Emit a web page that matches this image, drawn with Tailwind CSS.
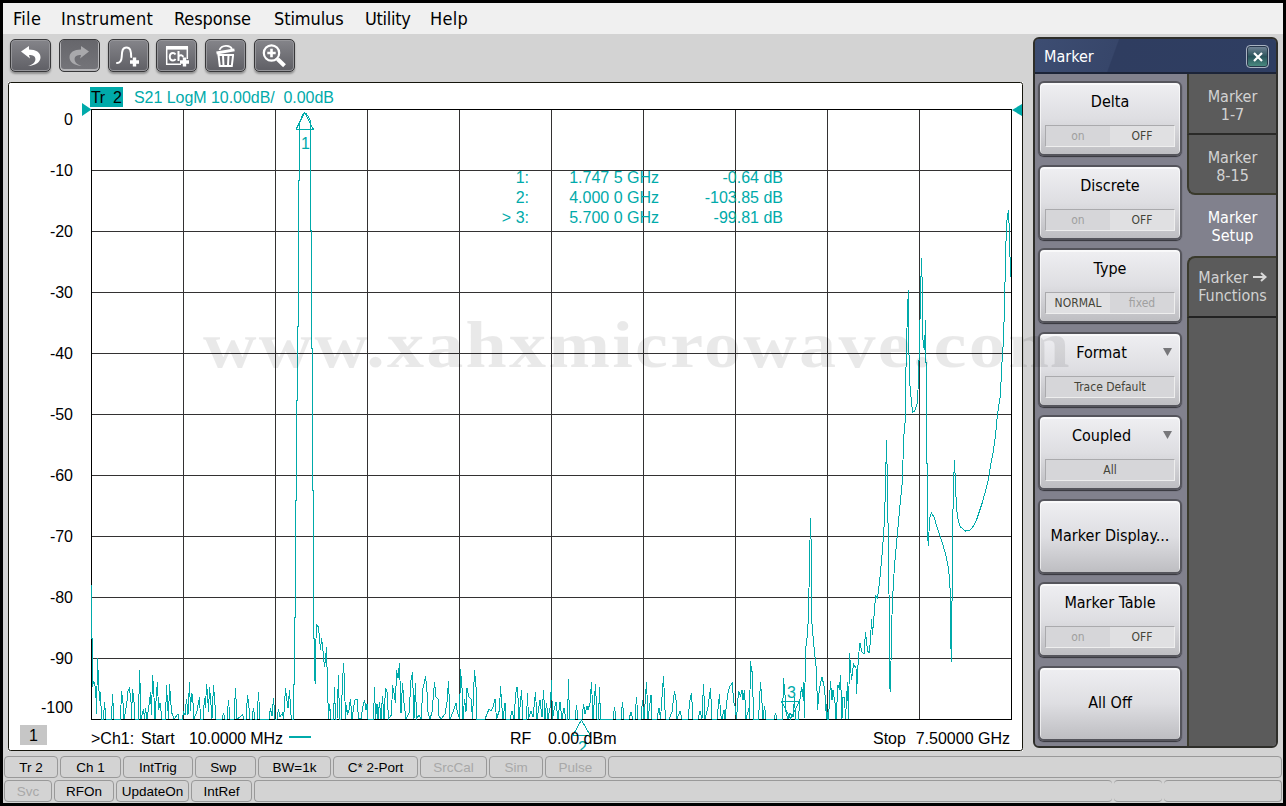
<!DOCTYPE html>
<html lang="en">
<head>
  <meta charset="UTF-8" />
  <meta name="viewport" content="width=device-width, initial-scale=1.0"/>
  <title>Network Analyzer</title>
  <script src="https://cdn.jsdelivr.net/npm/@tailwindcss/browser@4"></script>
</head>
<body class="bg-black overflow-hidden">
<div class="relative w-[1286px] h-[806px] p-[3px] font-['DejaVu_Sans_Condensed','DejaVu_Sans',sans-serif]">
  <div class="w-full h-full bg-[#d3d3d3] flex flex-col">

    <!-- Menu bar -->
    <div class="h-[31px] shrink-0 bg-[#f0f0f0] flex items-center pl-[10px] text-[18px] tracking-[0.3px] text-black whitespace-nowrap">
      <a class="w-12">File</a>
      <a class="w-[113px]">Instrument</a>
      <a class="w-[100px] tracking-[-0.1px]">Response</a>
      <a class="w-[91px] tracking-[-0.1px]">Stimulus</a>
      <a class="w-[65px] tracking-[-0.3px]">Utility</a>
      <a>Help</a>
    </div>

    <div class="flex h-[719px] shrink-0">
      <!-- Left side: toolbar + chart -->
      <div class="w-[1020px] pl-[5px] flex flex-col">
        <div class="h-12 shrink-0 flex gap-[7.8px] pt-[5px] pl-[2px]">
          <div class="w-[41px] h-[33px] rounded-[5px] border border-[#38383a] bg-linear-to-b from-[#85858a] to-[#5f5f65] shadow-[inset_0_0_0_1px_#96969a,0_2px_2px_#00000050] flex items-center justify-center">
            <svg class="w-7 h-7" viewBox="0 0 28 28" fill="#fff"><path d="M4 9.500l8-5.500v3.500c7 0 11.500 3 11.500 7.800 0 4.700-4.500 8.200-12.500 8.700 5-1.500 7.400-3.800 7.400-6.800 0-2.900-2.400-4.200-6.400-4.200L13 16.500z"/></svg>
          </div>
          <div class="w-[41px] h-[33px] rounded-[5px] border border-[#38383a] bg-linear-to-b from-[#66666b] to-[#75757a] shadow-[inset_0_-1px_0_1px_#b5b5b8] flex items-center justify-center">
            <svg class="w-7 h-7" viewBox="0 0 28 28" fill="#a9a9ac"><path d="M24 9.500l-8-5.500v3.500c-7 0-11.500 3-11.500 7.800 0 4.700 4.500 8.200 12.500 8.700-5-1.500-7.400-3.800-7.400-6.800 0-2.900 2.400-4.200 6.400-4.200L15 16.500z"/></svg>
          </div>
          <div class="w-[41px] h-[33px] rounded-[5px] border border-[#38383a] bg-linear-to-b from-[#85858a] to-[#5f5f65] shadow-[inset_0_0_0_1px_#96969a,0_2px_2px_#00000050] flex items-center justify-center">
            <svg class="w-7 h-7" viewBox="0 0 28 28" fill="none" stroke="#fff"><path stroke-width="2" stroke-linecap="round" d="M3 21c3.500 0 4.500-2 4.700-6 .2-6 .8-9.500 4.800-9.500S17 9 17.200 15"/><path stroke-width="3.400" d="M20.500 15.500v9M16 20h9"/></svg>
          </div>
          <div class="w-[41px] h-[33px] rounded-[5px] border border-[#38383a] bg-linear-to-b from-[#85858a] to-[#5f5f65] shadow-[inset_0_0_0_1px_#96969a,0_2px_2px_#00000050] flex items-center justify-center">
            <svg class="w-7 h-7" viewBox="0 0 28 28" fill="none" stroke="#fff"><path stroke-width="1.500" d="M18 22.300H3.700V5.500h20.600V17"/><path stroke-width="3.600" d="M3 5.800h22"/><path stroke-width="2" d="M12.500 12.500c-.6-1-1.300-1.500-2.500-1.500-2.300 0-3.200 1.600-3.200 3.800S7.700 18.500 10 18.500c1.200 0 2-.5 2.600-1.500M15.500 9v10M15.500 14.500c1.500-2 4.500-1.500 4.500.8"/><path stroke-width="3.400" d="M21.500 15.500v9M17 20h9"/></svg>
          </div>
          <div class="w-[41px] h-[33px] rounded-[5px] border border-[#38383a] bg-linear-to-b from-[#85858a] to-[#5f5f65] shadow-[inset_0_0_0_1px_#96969a,0_2px_2px_#00000050] flex items-center justify-center">
            <svg class="w-7 h-7" viewBox="0 0 28 28" fill="none" stroke="#fff"><path stroke-width="1.800" d="M7.500 8C9.500 3 18 2.500 20 7"/><path stroke-width="2.800" d="M4.500 11L22.500 7.800"/><path stroke-width="2" d="M5.500 13h16.500M6.500 13l1.300 11h12l1.300-11M11 13.500l.5 10M16.500 13.500l-.5 10"/></svg>
          </div>
          <div class="w-[41px] h-[33px] rounded-[5px] border border-[#38383a] bg-linear-to-b from-[#85858a] to-[#5f5f65] shadow-[inset_0_0_0_1px_#96969a,0_2px_2px_#00000050] flex items-center justify-center">
            <svg class="w-7 h-7" viewBox="0 0 28 28" fill="none" stroke="#fff"><circle cx="11.500" cy="11" r="7.700" stroke-width="2.200"/><path stroke-width="2.600" d="M11.500 6.800v8.400M7.300 11h8.400"/><path stroke-width="4" d="M17.500 17l7 6.700"/></svg>
          </div>
        </div>

        <!-- Chart -->
        <svg class="w-[1015px] h-[669px] shrink-0 bg-white font-['Liberation_Sans',Arial,sans-serif]" viewBox="8 82 1015 669" font-size="16">
          <rect x="8.500" y="82.500" width="1014" height="668" rx="2" fill="#fff" stroke="#15150c"/>
          <g shape-rendering="crispEdges">
            <path id="grid" stroke="#333132" fill="none"/>
            <path d="M91.500 109.500h920v610h-920z" fill="none" stroke="#000"/>
            <polyline fill="none" stroke="#0aa" points="91.5,585 91.5,637 92.5,640 92.5,687 93.5,682 94.5,683 95.5,689 96.5,706 96.5,714 97.5,658 98.5,680 99.5,701 100.5,692 101.5,719 103.5,719 104.5,702 106,719 111.500,719 112.5,694 114,719 120.5,719 121.5,691 123,703 124,719 125.5,712 127,701 128,691 129.5,688 131,702 131.500,719 132.5,689 134,702 135,719 138.500,719 139.5,670 140.5,695 141,719 143.5,709 144.5,719 145.5,708 147,719 149.5,702 150.5,692 151.5,715 152.5,675 153.5,686 155,719 156.5,692 157.5,682 158.5,710 160,703 162,719 165.500,719 166.5,685 167.5,703 168.5,719 169.5,684 170.5,698 171.5,712 174,719 178,714 179,719 182.5,719 183.5,712 185,715 186.5,699 188,715 189.5,682 190.5,711 191.5,694 192.5,695 194,719 197,711 199.5,697 200.5,719 203,719 204.5,698 205.5,708 206.5,684 207.5,693 208.5,712 209.5,687 210.5,698 212,719 213.5,685 215,705 216,719 222,719 223.5,713 225,719 227,719 228.5,700 230,719 234,719 235.5,688 237,719 240,717 242.5,715 244,719 246,719 247.5,695 248.5,702 250,719 252,719 253.5,708 255,719 257,719 258.5,692 260,719 269,719 270.5,708 272,716 273.5,698 275,719 277,719 278.5,709 280,717 282.5,713 283.5,719 284.5,705 285.5,688 286.5,698 288,708 289.5,690 291,715 292,719 293.5,719 293.5,684 294.5,684 294.5,617 295.5,617 295.5,500 296.5,500 296.5,400 297.5,400 297.5,326 298.5,326 298.5,180 299.5,180 299.5,125 300.5,120 302.5,115 304.5,113 306.5,114 308.5,117 310.5,121 310.5,230 311.5,230 311.5,348 312.5,348 312.5,490 313.5,490 313.5,638 314.5,638 314.5,678 315.5,684 315.5,653 316.5,625 318.5,627 320.5,650 321.5,638 322.5,645 323.5,656 324.5,667 325.5,660 326.5,647 327.5,685 328.5,719 329.5,704 331,719 333.5,719 334.5,687 335.5,719 337,719 338.5,675 339.5,719 341,719 342.500,684 343.5,663 344.5,682 345.5,719 346.5,705 347.5,715 349,710 350.5,699 352,719 354,705 355,700 357,699 358.5,718 361,719 363,706 364.5,700 366,710 367,704 368,719 373.5,719 374.5,687 375.5,719 377,704 378,719 379.5,702 381,719 382.5,696 384,719 385.5,688 387,692 388.5,719 391.500,715 392.5,685 394,693 395.5,703 396.5,670 398,678 399.5,663 401,713 402.5,683 404,703 406,719 409.5,712 410.5,683 412.5,672 414,719 415.5,683 416.5,719 419,715 421,719 423,688 424,684 425.5,676 427,692 428,712 430,719 432,712 434.5,682 436,697 438,699 439,716 441,719 445,714 447,702 448.5,681 450,719 453,712 454.5,708 456,703 457,710 459.5,719 460.5,669 462,688 463,719 464.5,699 466,712 467,688 469,697 471,699 472.5,719 474.5,670 476,687 477,719 485,719 489,709 491,711 493,707 495,699 496.5,719 499.5,710 500.5,686 502,708 503,719 505,703 506,719 510,719 512,711 514,719 515,704 516.5,687 517.5,687 519,719 521.5,690 523,719 526.5,719 527.5,693 528.5,719 531,711 533,717 535.5,692 537,719 540,700 542,717 543.5,690 545,719 546.5,703 548,719 550.5,705 551.5,680 552.5,719 554,710 556,702 558,719 560,702 562,719 564,708 566,719 567.500,719 568.5,679 569.5,719 575,719 576.5,705 578,719 582,719 583.5,704 585,714 587,706 588,710 590,703 591.5,682 593,719 595.5,684 597,719 598.5,719 599.5,687 600.5,719 613,719 614.5,707 616,719 621,719 622.5,702 624,719 629,719 631,712 633,719 635,719 636.5,697 638,719 641,719 642.5,700 644,719 646.5,682 648,719 651,695 652,719 657,719 659,708 660.5,719 663.5,676 665,710 666,719 669,719 672,712 674.5,691 676,700 677,719 680,711 682,719 688,719 690,700 691.5,693 693,719 698,719 700,711 702,719 703.5,684 705,719 708,707 710.5,688 712,719 717,719 719.5,694 720.5,714 722,719 724,710 725,719 727,700 728.5,690 730,686 732.5,683 733.5,702 735,706 736.5,719 738.5,691 740.5,696 742,690 743,700 744.5,690 746,719 749,708 749.500,719 750.5,661 751.500,670 752.5,673 753.500,719 758.500,719 760.5,682 762,703 763,719 764.5,706 766,719 774,719 775.5,713 777,719 782.5,719 783.5,678 785,695 786,712 788,719 790,713 793,717 794.500,697 795.5,719 798.5,719 799.5,703 801.5,687 802.5,697 803.5,682 804.5,718 805.5,650 807.5,634 808.5,615 809.5,562 810.5,518 811.5,559 811.5,618 813.5,642 815.5,662 816.5,670 817.5,710 819.5,688 822,677 824.5,688 825.5,702 826.5,719 826.500,704 827.5,719 828.500,719 830.5,681 832,700 833,690 835,703 836,719 838,685 839.500,690 840.5,675 842,719 843,697 844.5,697 845.5,719 847.5,682 848.5,719 849.5,653 851.5,680 853.5,664 856,668 856.5,694 858.5,656 860,643 862,652 864,654 865.5,632 867.5,651 869,653 870.5,641 871.5,619 872.5,635 874.5,610 875.5,596 877.5,598 879.5,582 882.5,550 884.5,520 885.5,485 886.5,440 887.5,486 888.5,557 889.5,630 889.5,685 890.5,692 891.5,630 892.5,600 894.5,565 897.5,533 900.500,500 902.5,480 903.5,440 905.5,417 905.5,388 906.5,347 907.5,309 908.5,290 908.5,328 909.5,380 911.5,402 912.5,412 914.5,411 917.5,403 918.5,377 919.5,345 920.5,295 921.5,258 922.5,295 922.5,335 923.5,345 924.5,350 925.5,320 925.5,362 926.5,362 926.5,463 927.5,463 927.5,535 928.5,546 929.5,518 931.5,513 934,517 937,527 940,536 943,545 946,556 948.5,568 949.5,580 950.5,596 950.5,636 951.5,662 951.500,608 952.5,595 952.500,535 953.5,485 954.5,460 955.5,485 956.5,508 958.5,522 960.5,527 965.5,531 970.5,530 973.5,526 976.5,520 979.5,511 982.5,502 985.5,491 988.5,479 990.5,466 993.5,450 995.5,435 997.5,414 1000.5,395 1001.5,370 1003.5,340 1004.5,305 1005.5,260 1006.5,223 1008.5,210 1009.5,235 1010.5,277"/>
            <path d="M296 129.500h18M304.500 112.500l-8.500 17M304.500 112.500l9 17M573 735.500h17M581.500 720l-8.500 15M581.500 720l8.500 15M781.500 701.500h18l-9 17z" fill="none" stroke="#0aa"/>
          </g>
          <path d="M82 103v13l9.500-6.500zM1022 104v12l-10-6z" fill="#0aa"/>

          <rect x="90" y="87" width="33" height="20" fill="#0aa"/>
          <text x="91" y="103" textLength="31" xml:space="preserve">Tr  2</text>
          <g fill="#0aa">
            <text x="134" y="103" textLength="200" class="whitespace-pre">S21 LogM 10.00dB/  0.00dB</text>
            <text x="301" y="149">1</text>
            <text x="787" y="698">3</text>
            <svg x="570" y="737" width="30" height="13" viewBox="570 737 30 13"><text x="578" y="753">2</text></svg>
            <g text-anchor="end">
              <text x="529" y="183">1:</text><text x="659" y="183">1.747 5 GHz</text><text x="783" y="183">-0.64 dB</text>
              <text x="529" y="203">2:</text><text x="659" y="203">4.000 0 GHz</text><text x="783" y="203">-103.85 dB</text>
              <text x="529" y="223">&gt; 3:</text><text x="659" y="223">5.700 0 GHz</text><text x="783" y="223">-99.81 dB</text>
            </g>
          </g>
          <g id="axis" text-anchor="end"></g>

          <rect x="20" y="725" width="27" height="20" fill="#c6c6c6"/>
          <text x="29" y="741">1</text>
          <text x="91" y="744">&gt;Ch1:</text>
          <text x="141" y="744">Start</text>
          <text x="189" y="744" textLength="94">10.0000 MHz</text>
          <path d="M289 737h22" stroke="#0aa" stroke-width="2"/>
          <text x="510" y="744">RF</text>
          <text x="548" y="744">0.00 dBm</text>
          <text x="873" y="744">Stop</text>
          <text x="1010" y="744" text-anchor="end">7.50000 GHz</text>
        </svg>
      </div>

      <!-- Softkey panel -->
      <div class="ml-[10px] mt-[3px] w-[245px] h-[711px] rounded-[6px] border-2 border-[#2e2e2a] bg-[#5b5b5b] flex flex-col overflow-hidden">
        <div class="h-[35px] shrink-0 bg-[linear-gradient(110deg,#3d4d72_0%,#37466a_33%,#2f3d60_33.500%,#2f3e62_100%)] border-b-2 border-[#1c2438] flex items-center justify-between pl-[9px] pr-[7px] text-[16px] text-white">
          <span class="pt-[2px]">Marker</span>
          <div class="w-[23px] h-[23px] mt-[2px] rounded-[4px] border border-[#a9b3c2] bg-linear-to-b from-[#76869a] via-[#29535b] to-[#4d9084] shadow-[inset_0_0_0_1px_#26364a] flex items-center justify-center">
            <svg class="w-3 h-3" viewBox="0 0 12 12" stroke="#fff" stroke-width="2.200"><path d="M2 2l8 8M10 2l-8 8"/></svg>
          </div>
        </div>
        <div class="flex grow">
          <div class="w-[152px] shrink-0 bg-[#81818d] pl-[3px] pr-[5px] pt-[7px] pb-[5px] flex flex-col justify-between text-[16px] text-black text-center leading-5">
            <div class="h-[75px] rounded-[6px] border-2 border-[#55555c] bg-linear-to-b from-[#efeff2] via-[#dedee2] to-[#bebec2] shadow-[inset_0_1px_0_1px_#ffffffa0,0_1px_1px_#33333a] pt-[9px]">
              Delta
              <div class="flex mx-[5px] mt-[13px] h-[22px] border border-[#aaaaad] border-r-[#eee] border-b-[#eee] text-[12px]"><span class="w-1/2 bg-[#d6d6d9] text-[#a0a0a0]">on</span><span class="w-1/2 bg-[#e0e0e2] text-[#444438]">OFF</span></div>
            </div>
            <div class="h-[75px] rounded-[6px] border-2 border-[#55555c] bg-linear-to-b from-[#efeff2] via-[#dedee2] to-[#bebec2] shadow-[inset_0_1px_0_1px_#ffffffa0,0_1px_1px_#33333a] pt-[9px]">
              Discrete
              <div class="flex mx-[5px] mt-[13px] h-[22px] border border-[#aaaaad] border-r-[#eee] border-b-[#eee] text-[12px]"><span class="w-1/2 bg-[#d6d6d9] text-[#a0a0a0]">on</span><span class="w-1/2 bg-[#e0e0e2] text-[#444438]">OFF</span></div>
            </div>
            <div class="h-[75px] rounded-[6px] border-2 border-[#55555c] bg-linear-to-b from-[#efeff2] via-[#dedee2] to-[#bebec2] shadow-[inset_0_1px_0_1px_#ffffffa0,0_1px_1px_#33333a] pt-[9px]">
              Type
              <div class="flex mx-[5px] mt-[13px] h-[22px] border border-[#aaaaad] border-r-[#eee] border-b-[#eee] text-[12px]"><span class="w-1/2 bg-[#e0e0e2] text-[#444438]">NORMAL</span><span class="w-1/2 bg-[#d6d6d9] text-[#a0a0a0]">fixed</span></div>
            </div>
            <div class="h-[75px] rounded-[6px] border-2 border-[#55555c] bg-linear-to-b from-[#efeff2] via-[#dedee2] to-[#bebec2] shadow-[inset_0_1px_0_1px_#ffffffa0,0_1px_1px_#33333a] pt-[9px]">
              <div class="flex h-5"><span class="w-[123px]">Format</span><svg class="w-[9px] h-2 mt-[5px]" viewBox="0 0 9 8"><path d="M0 0h9l-4.500 8z" fill="#77777a"/></svg></div>
              <div class="mx-[5px] mt-[13px] h-[22px] border border-[#aaaaad] border-r-[#eee] border-b-[#eee] bg-[#d6d6d9] text-[12px] text-[#444438]">Trace Default</div>
            </div>
            <div class="h-[75px] rounded-[6px] border-2 border-[#55555c] bg-linear-to-b from-[#efeff2] via-[#dedee2] to-[#bebec2] shadow-[inset_0_1px_0_1px_#ffffffa0,0_1px_1px_#33333a] pt-[9px]">
              <div class="flex h-5"><span class="w-[123px]">Coupled</span><svg class="w-[9px] h-2 mt-[5px]" viewBox="0 0 9 8"><path d="M0 0h9l-4.500 8z" fill="#77777a"/></svg></div>
              <div class="mx-[5px] mt-[13px] h-[22px] border border-[#aaaaad] border-r-[#eee] border-b-[#eee] bg-[#d6d6d9] text-[12px] text-[#444438]">All</div>
            </div>
            <div class="h-[75px] rounded-[6px] border-2 border-[#55555c] bg-linear-to-b from-[#efeff2] via-[#dedee2] to-[#bebec2] shadow-[inset_0_1px_0_1px_#ffffffa0,0_1px_1px_#33333a] flex items-center justify-center whitespace-nowrap">Marker Display...</div>
            <div class="h-[75px] rounded-[6px] border-2 border-[#55555c] bg-linear-to-b from-[#efeff2] via-[#dedee2] to-[#bebec2] shadow-[inset_0_1px_0_1px_#ffffffa0,0_1px_1px_#33333a] pt-[9px]">
              Marker Table
              <div class="flex mx-[5px] mt-[13px] h-[22px] border border-[#aaaaad] border-r-[#eee] border-b-[#eee] text-[12px]"><span class="w-1/2 bg-[#d6d6d9] text-[#a0a0a0]">on</span><span class="w-1/2 bg-[#e0e0e2] text-[#444438]">OFF</span></div>
            </div>
            <div class="h-[75px] rounded-[6px] border-2 border-[#55555c] bg-linear-to-b from-[#efeff2] via-[#dedee2] to-[#bebec2] shadow-[inset_0_1px_0_1px_#ffffffa0,0_1px_1px_#33333a] flex items-center justify-center">All Off</div>
          </div>

          <!-- Tabs -->
          <div class="grow flex flex-col text-[16px] leading-[18px] text-[#d2d2d2] text-center bg-[#81818d]">
            <div class="h-[61px] pt-[5px] border-l-2 border-b-2 border-l-[#3a3a2c] border-b-[#2a2a28] bg-[#5b5b5b] flex items-center justify-center">Marker<br>1-7</div>
            <div class="h-[60px] pt-[5px] rounded-bl-[8px] border-l-2 border-b-2 border-[#3a3a2c] bg-[#5b5b5b] flex items-center justify-center">Marker<br>8-15</div>
            <div class="h-[61px] pt-[2px] pl-[2px] flex items-center justify-center text-white">Marker<br>Setup</div>
            <div class="h-[62px] rounded-tl-[8px] border-l-2 border-y-2 border-[#3a3a2c] border-b-[#222] bg-[#5b5b5b] flex items-center justify-center"><span>Marker <svg class="inline w-[14px] h-3 align-baseline" viewBox="0 0 14 12" fill="none" stroke="#d8d8d8" stroke-width="2"><path d="M0 6h12M8 2l4.500 4L8 10"/></svg><br>Functions</span></div>
            <div class="grow border-l-2 border-[#3a3a2c] bg-[#5b5b5b]"></div>
          </div>
        </div>
      </div>
    </div>

    <!-- Status bar -->
    <div class="mt-[3px] pl-[1px] flex flex-col gap-[2px] text-[13.5px] leading-[22px] text-center text-black font-['Liberation_Sans',Arial,sans-serif] whitespace-nowrap">
      <div class="flex gap-[2px] h-[22px]">
        <div class="w-[54px] rounded-[4px] border border-[#999]">Tr 2</div>
        <div class="w-[61px] rounded-[4px] border border-[#999]">Ch 1</div>
        <div class="w-[70px] rounded-[4px] border border-[#999]">IntTrig</div>
        <div class="w-[61px] rounded-[4px] border border-[#999] pr-1">Swp</div>
        <div class="w-[73px] rounded-[4px] border border-[#999]">BW=1k</div>
        <div class="w-[85px] rounded-[4px] border border-[#999]">C* 2-Port</div>
        <div class="w-[67px] rounded-[4px] border border-[#999] text-[#a8a8a8]">SrcCal</div>
        <div class="w-[54px] rounded-[4px] border border-[#999] text-[#a8a8a8]">Sim</div>
        <div class="w-[61px] rounded-[4px] border border-[#999] text-[#a8a8a8]">Pulse</div>
        <div class="w-[674px] rounded-[4px] border border-[#999]"></div>
      </div>
      <div class="flex gap-[2px] h-[22px]">
        <div class="w-12 rounded-[4px] border border-[#999] text-[#a8a8a8]">Svc</div>
        <div class="w-[60px] rounded-[4px] border border-[#999]">RFOn</div>
        <div class="w-[73px] rounded-[4px] border border-[#999]">UpdateOn</div>
        <div class="w-[61px] rounded-[4px] border border-[#999]">IntRef</div>
        <div class="w-[858px] rounded-[4px] border border-r-0 border-[#999]"></div>
        <div class="w-12 rounded-[4px] border-y border-[#999]"></div>
        <div class="w-[118px] rounded-[4px] border border-l-0 border-[#999]"></div>
      </div>
    </div>
  </div>

  <!-- Watermark -->
  <svg class="absolute left-0 top-0 w-[1286px] h-[806px] pointer-events-none" viewBox="0 0 1286 806">
    <text x="203" y="367" textLength="869" lengthAdjust="spacingAndGlyphs" letter-spacing="2" font-family="Liberation Serif, serif" font-weight="bold" font-size="66" fill="#000" fill-opacity="0.085">www.xahxmicrowave.com</text>
  </svg>
</div>
<script>
  // 10 x 10 divisions
  let d = "";
  for (let i = 1; i < 10; i++) {
    d += `M${91.5 + i * 92} 109.5v610M91.5 ${109.5 + i * 61}h920`;
  }
  document.getElementById("grid").setAttribute("d", d);

  // dB labels, the first and last are moved inside the plot
  let labels = "";
  for (let i = 0; i <= 10; i++) {
    const y = i === 0 ? 125 : i === 10 ? 713 : 115 + i * 61;
    labels += `<text x="73" y="${y}">${i === 0 ? "0" : "-" + i * 10}</text>`;
  }
  document.getElementById("axis").innerHTML = labels;
</script>
</body>
</html>
